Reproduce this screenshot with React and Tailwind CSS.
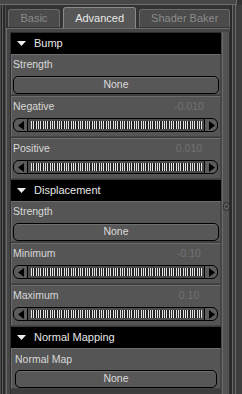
import React from 'react'

const ArrowLeft = () => (
  <svg width="7" height="9" viewBox="0 0 7 9">
    <path d="M0 4.5 L6 0 L6 9 Z" fill="#000" />
  </svg>
)

const ArrowRight = () => (
  <svg width="7" height="9" viewBox="0 0 7 9">
    <path d="M7 4.5 L1 0 L1 9 Z" fill="#000" />
  </svg>
)

const Header = ({ title }) => (
  <div className="h-[21px] shrink-0 bg-black flex items-center pl-[6px] gap-[8px]">
    <svg width="9" height="5" viewBox="0 0 9 5">
      <path d="M0 0 L9 0 L4.5 5 Z" fill="#ececec" />
    </svg>
    <span className="text-[11px] text-[#e6e6e6] leading-none">{title}</span>
  </div>
)

const Group = ({ label, value, children, wide }) => (
  <div
    className={`h-[41px] shrink-0 bg-[#555555] border border-t-[#6c6c6c] border-l-[#6c6c6c] border-b-[#444] border-r-[#444] flex flex-col ${
      wide ? 'px-[3px] pt-[1px]' : 'px-[1px]'
    }`}
  >
    <div className="h-[20px] flex items-center justify-between">
      <span className="text-[10.5px] text-[#d8d8d8]">{label}</span>
      {value && (
        <span className="w-[40px] mr-[10px] text-center text-[10.5px] text-[#727272]">{value}</span>
      )}
    </div>
    <div className="mt-[1px]">{children}</div>
  </div>
)

const NoneButton = () => (
  <div className="h-[18px] rounded-[5px] border border-black bg-[#575757] shadow-[inset_0_1px_0_#6e6e6e] flex items-center justify-center">
    <span className="text-[10.5px] text-[#dcdcdc]">None</span>
  </div>
)

const Slider = () => (
  <div className="h-[14px] flex mr-[1px]">
    <div className="w-[15px] rounded-l-[6px] border border-black bg-[#5c5c5c] flex items-center justify-center pl-[1px]">
      <ArrowLeft />
    </div>
    <div className="flex-1 border-y border-black bg-[#4a4a4a] flex items-center pl-[3px] pr-[2px]">
      <div className="h-[8px] w-full bg-[repeating-linear-gradient(90deg,#e2e2e2_0px,#e2e2e2_1px,#262626_1px,#262626_2px,#e2e2e2_2px,#e2e2e2_3px,#262626_3px,#262626_5px,#e2e2e2_5px,#e2e2e2_6px,#262626_6px,#262626_7px)]" />
    </div>
    <div className="w-[14px] rounded-r-[6px] border border-black bg-[#5c5c5c] flex items-center justify-center">
      <ArrowRight />
    </div>
  </div>
)

const Tab = ({ label, active, w }) => (
  <div
    className={`${w} rounded-t-[3px] border border-b-0 flex items-center justify-center text-[11px] ${
      active
        ? 'h-[21px] bg-[#575757] border-[#8a8a8a] text-[#e8e8e8]'
        : 'h-[18px] mb-[1px] bg-[#4b4b4b] border-[#6a6a6a] text-[#8a8a8a]'
    }`}
  >
    {label}
  </div>
)

export default function App() {
  return (
    <div className="w-[242px] h-[394px] overflow-hidden bg-[#333333] flex flex-col font-['Liberation_Sans',Arial,sans-serif]">
      <div className="h-[5px] shrink-0 bg-[#474747] border-b border-[#6e6e6e] mr-[5px] border-r" />
      <div className="flex flex-1 min-h-0">
        {/* left frame */}
        <div className="w-[6px] shrink-0 flex">
          <div className="w-[2px] bg-[#4a4a4a] border-r border-[#252525]" />
          <div className="w-[1px] bg-[#5e5e5e]" />
          <div className="w-[2px] bg-[#2a2a2a]" />
          <div className="w-[1px] bg-[#4c4c4c]" />
        </div>

        <div className="w-[224px] shrink-0 flex flex-col">
          <div className="h-[23px] shrink-0 flex items-end pl-[2px] gap-[3px]">
            <Tab label="Basic" w="w-[52px]" />
            <Tab label="Advanced" w="w-[74px]" active />
            <Tab label="Shader Baker" w="w-[91px]" />
          </div>

          <div className="flex-1 min-h-0 flex border-t border-l border-[#6c6c6c] bg-[#464646] pt-[3px] pl-[3px]">
            <div className="w-[211px] shrink-0 flex flex-col gap-[1px] bg-[#3c3c3c] border-t border-l border-[#2e2e2e]">
              <Header title="Bump" />
              <div className="-mt-[1px] flex flex-col gap-[1px]">
                <Group label="Strength">
                  <NoneButton />
                </Group>
                <Group label="Negative" value="-0.010">
                  <Slider />
                </Group>
                <Group label="Positive" value="0.010">
                  <Slider />
                </Group>
              </div>
              <Header title="Displacement" />
              <div className="-mt-[1px] flex flex-col gap-[1px]">
                <Group label="Strength">
                  <NoneButton />
                </Group>
                <Group label="Minimum" value="-0.10">
                  <Slider />
                </Group>
                <Group label="Maximum" value="0.10">
                  <Slider />
                </Group>
              </div>
              <Header title="Normal Mapping" />
              <div className="-mt-[1px] flex flex-col gap-[1px]">
                <Group label="Normal Map" wide>
                  <NoneButton />
                </Group>
              </div>
            </div>

            {/* scrollbar */}
            <div className="w-[8px] shrink-0 ml-[1px] bg-[#535353] border-l border-[#6a6a6a] border-r border-r-[#2e2e2e] flex flex-col items-center pt-[170px]">
              <div className="w-[7px] h-[9px] rounded-full border border-[#2a2a2a] bg-[#5e5e5e] flex items-center justify-center">
                <div className="w-[3px] h-[3px] rounded-full bg-[#3a3a3a]" />
              </div>
            </div>
          </div>
        </div>

        {/* right frame */}
        <div className="flex-1 flex">
          <div className="w-[2px] bg-[#2a2a2a]" />
          <div className="w-[1px] bg-[#6a6a6a]" />
          <div className="w-[2px] bg-[#3a3a3a]" />
          <div className="w-[1px] bg-[#6a6a6a]" />
          <div className="flex-1 bg-[#3e3e3e]" />
        </div>
      </div>
    </div>
  )
}
